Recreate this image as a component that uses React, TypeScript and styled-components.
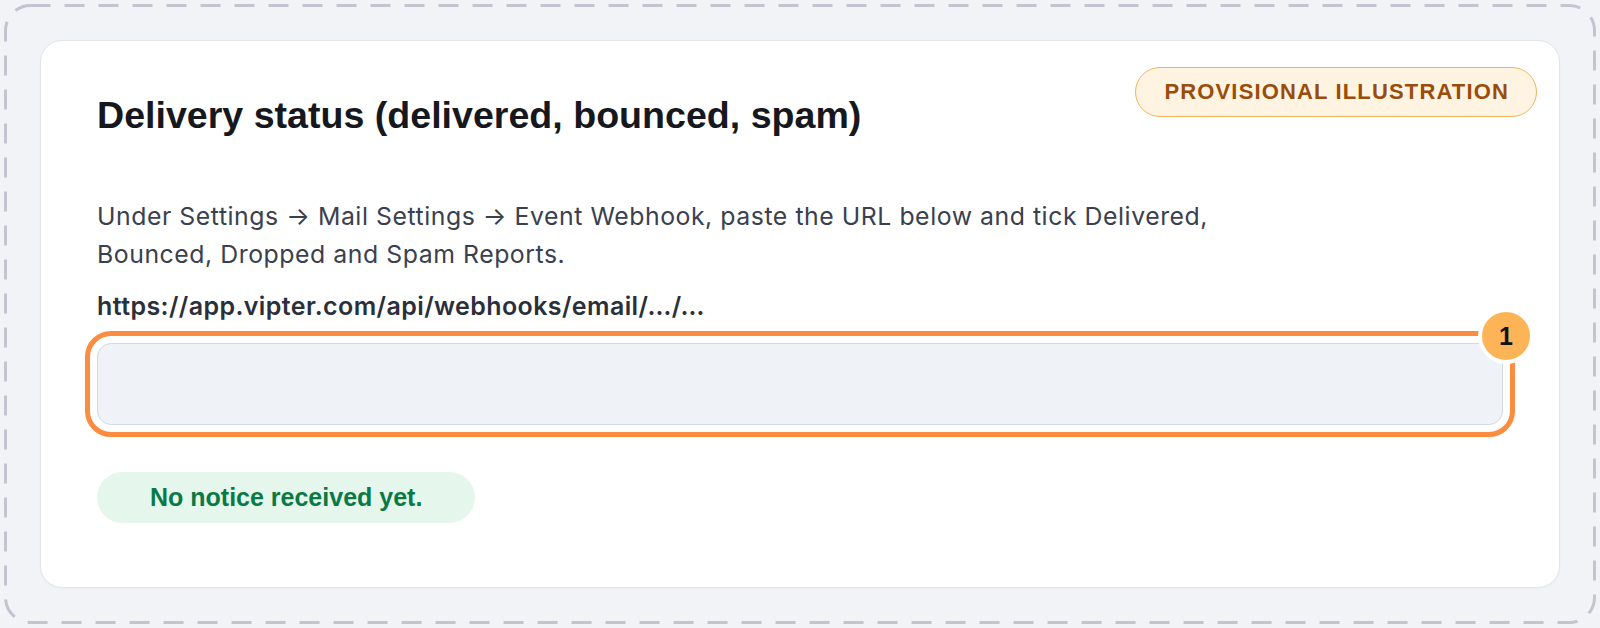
import React from 'react'
import styled, { createGlobalStyle } from 'styled-components'

const GlobalStyle = createGlobalStyle`
    html, body {
        margin: 0;
        padding: 0;
        background: #f1f3f7;
    }
    * {
        box-sizing: border-box;
    }
`

const Page = styled.div`
    padding: 4px;
`

const Frame = styled.div`
    position: relative;
    height: 620px;
    padding: 36px;
    display: flex;
    border-radius: 26px;
    background: #f1f3f7;
`

const DashedEdge = styled.svg`
    position: absolute;
    inset: 0;
    pointer-events: none;
`

const Card = styled.section`
    position: relative;
    flex: 1;
    display: flex;
    flex-direction: column;
    align-items: flex-start;
    padding: 52px 56px 0 56px;
    background: #ffffff;
    border: 1px solid #e2e5ea;
    border-radius: 22px;
    box-shadow: 0 1px 2px rgba(16, 24, 40, 0.03);
`

const Tag = styled.span`
    position: absolute;
    top: 26px;
    right: 22px;
    height: 50px;
    display: flex;
    align-items: center;
    padding: 0 27px 0 28px;
    border: 1.5px solid #f2b35f;
    border-radius: 999px;
    background: #fff3e2;
    color: #9a4d0a;
    font-family: 'Liberation Sans', Arial, sans-serif;
    font-weight: 700;
    font-size: 22px;
    letter-spacing: 1.15px;
    text-transform: uppercase;
`

const Title = styled.h2`
    margin: 0;
    font-family: 'Liberation Sans', Arial, sans-serif;
    font-weight: 700;
    font-size: 37.6px;
    line-height: 44px;
    color: #16181d;
`

const Description = styled.p`
    margin: 60px 0 0 0;
    max-width: 1170px;
    font-family: Inter, 'Liberation Sans', sans-serif;
    font-size: 24.8px;
    line-height: 38px;
    letter-spacing: 0.55px;
    color: #3a404e;
`

const Url = styled.div`
    margin-top: 17px;
    font-family: Inter, 'Liberation Sans', sans-serif;
    font-weight: 600;
    font-size: 25px;
    line-height: 32px;
    letter-spacing: 0.4px;
    color: #2a2f3a;
`

const FieldWrap = styled.div`
    position: relative;
    align-self: stretch;
    margin-top: 21px;
`

const Field = styled.input`
    display: block;
    width: 100%;
    height: 82px;
    padding: 0 20px;
    background: #eff2f6;
    border: 1.5px solid #d3d9e1;
    border-radius: 14px;
    outline: 5px solid #fb8c40;
    outline-offset: 7px;
    font-family: Inter, sans-serif;
    font-size: 22px;
`

const StepBadge = styled.span`
    position: absolute;
    top: -35px;
    right: -31px;
    width: 56px;
    height: 56px;
    display: flex;
    align-items: center;
    justify-content: center;
    border: 4px solid #ffffff;
    border-radius: 50%;
    background: #fdb457;
    color: #111111;
    font-family: 'Liberation Sans', Arial, sans-serif;
    font-weight: 700;
    font-size: 25px;
`

const StatusPill = styled.div<{ $tone: 'ok' | 'warn' }>`
    margin-top: 47px;
    height: 51px;
    display: flex;
    align-items: center;
    padding: 0 53px;
    border-radius: 999px;
    background: ${(p) => (p.$tone === 'ok' ? '#e5f6ed' : '#fff3e2')};
    color: ${(p) => (p.$tone === 'ok' ? '#0a7a45' : '#9a4d0a')};
    font-family: 'Liberation Sans', Arial, sans-serif;
    font-weight: 700;
    font-size: 25px;
`

export default function App() {
    return (
        <Page>
            <GlobalStyle />
            <Frame>
                <DashedEdge width="1592" height="620" viewBox="0 0 1592 620">
                    <rect
                        x="1.5"
                        y="1.5"
                        width="1589"
                        height="617"
                        rx="25"
                        fill="none"
                        stroke="#c0c5cf"
                        strokeWidth="3"
                        strokeDasharray="20 14"
                    />
                </DashedEdge>
                <Card>
                    <Tag>Provisional illustration</Tag>
                    <Title>Delivery status (delivered, bounced, spam)</Title>
                    <Description>
                        Under Settings → Mail Settings → Event Webhook, paste the URL below and tick
                        Delivered, Bounced, Dropped and Spam Reports.
                    </Description>
                    <Url>https://app.vipter.com/api/webhooks/email/…/…</Url>
                    <FieldWrap>
                        <Field readOnly aria-label="Webhook URL" />
                        <StepBadge>1</StepBadge>
                    </FieldWrap>
                    <StatusPill $tone="ok">No notice received yet.</StatusPill>
                </Card>
            </Frame>
        </Page>
    )
}
